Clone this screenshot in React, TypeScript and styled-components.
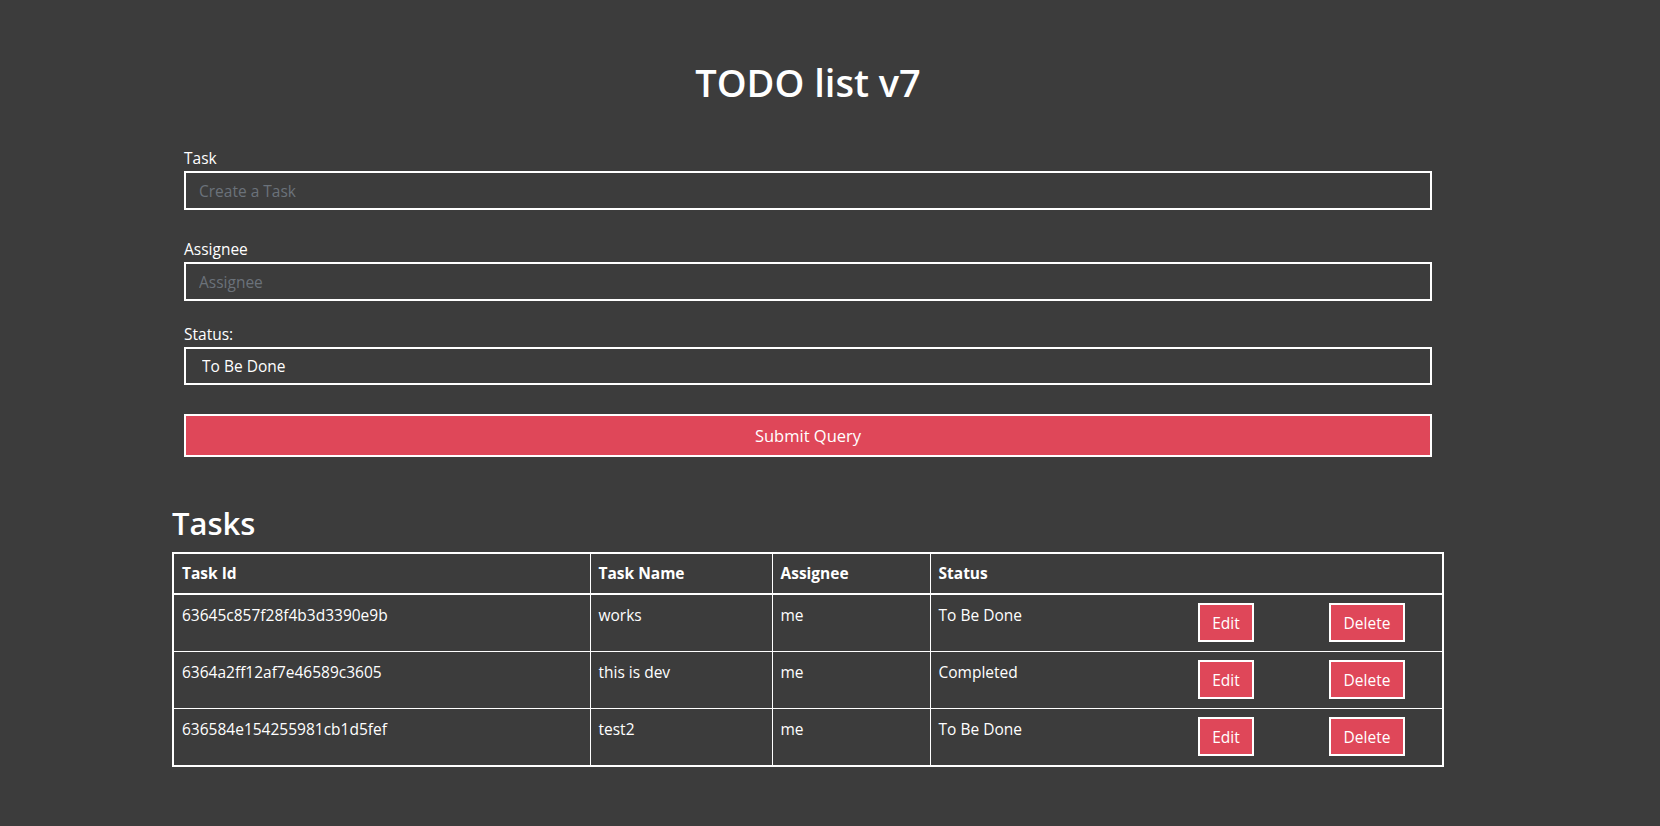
import React from "react";
import styled, { createGlobalStyle } from "styled-components";

const GlobalStyle = createGlobalStyle`
  html, body {
    margin: 0;
    padding: 0;
    background: #3c3c3c;
  }
  body {
    font-family: "Open Sans", "Noto Sans", sans-serif;
    color: #ffffff;
  }
  * { box-sizing: border-box; }
`;

const Page = styled.div`
  width: 1272px;
  margin: 0 0 40px 172px;
  display: flex;
  flex-direction: column;
`;

const Title = styled.h1`
  margin: 63px 0 47px;
  font-size: 38px;
  line-height: 38px;
  font-weight: 600;
  text-align: center;
`;

const Form = styled.form`
  padding: 0 12px;
  display: flex;
  flex-direction: column;
`;

const Field = styled.div<{ $after: number }>`
  display: flex;
  flex-direction: column;
  gap: 3px;
  margin-bottom: ${(p) => p.$after}px;
`;

const Label = styled.label`
  font-size: 15.5px;
  line-height: 20px;
`;

const TextInput = styled.input`
  height: 39px;
  border: 2px solid #ffffff;
  background: transparent;
  color: #ffffff;
  padding: 0 13px;
  font-family: inherit;
  font-size: 15.5px;
  outline: none;
  &::placeholder {
    color: #6b727a;
  }
`;

const StatusSelect = styled.select`
  height: 38px;
  border: 2px solid #ffffff;
  background: transparent;
  color: #ffffff;
  padding: 0 16px;
  font-family: inherit;
  font-size: 15.5px;
  appearance: none;
  -webkit-appearance: none;
  outline: none;
  option {
    color: #000;
  }
`;

const SubmitButton = styled.button`
  height: 43px;
  border: 2px solid #ffffff;
  background: #df4759;
  color: #ffffff;
  font-family: inherit;
  font-size: 16.5px;
  cursor: pointer;
`;

const SectionTitle = styled.h2`
  margin: 48px 0 11px;
  font-size: 31px;
  line-height: 36px;
  font-weight: 600;
`;

const Table = styled.table`
  width: 100%;
  border-collapse: collapse;
  border: 2px solid #ffffff;
  table-layout: fixed;
`;

const HeadCell = styled.th`
  border: 1px solid #ffffff;
  border-bottom-width: 2px;
  padding: 9px 8px 10px;
  font-size: 15.5px;
  line-height: 20px;
  font-weight: 700;
  text-align: left;
  vertical-align: middle;
`;

const Cell = styled.td<{ $open?: boolean }>`
  border-top: 1px solid #ffffff;
  border-bottom: 1px solid #ffffff;
  border-left: ${(p) => (p.$open ? "none" : "1px solid #ffffff")};
  border-right: ${(p) => (p.$open ? "none" : "1px solid #ffffff")};
  padding: 8px 8px 9px;
  font-size: 15.5px;
  line-height: 20px;
  text-align: left;
  vertical-align: top;
`;

const CellText = styled.div`
  padding-top: 2px;
`;

const ActionButton = styled.button<{ $w: number }>`
  display: block;
  width: ${(p) => p.$w}px;
  height: 39px;
  border: 2px solid #ffffff;
  background: #df4759;
  color: #ffffff;
  font-family: inherit;
  font-size: 15.5px;
  padding: 0;
  cursor: pointer;
`;

type Task = { id: string; name: string; assignee: string; status: string };

const tasks: Task[] = [
  { id: "63645c857f28f4b3d3390e9b", name: "works", assignee: "me", status: "To Be Done" },
  { id: "6364a2ff12af7e46589c3605", name: "this is dev", assignee: "me", status: "Completed" },
  { id: "636584e154255981cb1d5fef", name: "test2", assignee: "me", status: "To Be Done" },
];

export default function App() {
  return (
    <>
      <GlobalStyle />
      <Page>
        <Title>TODO list v7</Title>
        <Form onSubmit={(e) => e.preventDefault()}>
          <Field $after={29}>
            <Label htmlFor="task">Task</Label>
            <TextInput id="task" placeholder="Create a Task" />
          </Field>
          <Field $after={23}>
            <Label htmlFor="assignee">Assignee</Label>
            <TextInput id="assignee" placeholder="Assignee" />
          </Field>
          <Field $after={29}>
            <Label htmlFor="status">Status:</Label>
            <StatusSelect id="status" defaultValue="To Be Done">
              <option>To Be Done</option>
              <option>In Progress</option>
              <option>Completed</option>
            </StatusSelect>
          </Field>
          <SubmitButton type="submit">Submit Query</SubmitButton>
        </Form>
        <SectionTitle>Tasks</SectionTitle>
        <Table>
          <colgroup>
            <col style={{ width: 417 }} />
            <col style={{ width: 182 }} />
            <col style={{ width: 158 }} />
            <col style={{ width: 260 }} />
            <col style={{ width: 131 }} />
            <col />
          </colgroup>
          <thead>
            <tr>
              <HeadCell>Task Id</HeadCell>
              <HeadCell>Task Name</HeadCell>
              <HeadCell>Assignee</HeadCell>
              <HeadCell colSpan={3}>Status</HeadCell>
            </tr>
          </thead>
          <tbody>
            {tasks.map((t) => (
              <tr key={t.id}>
                <Cell><CellText>{t.id}</CellText></Cell>
                <Cell><CellText>{t.name}</CellText></Cell>
                <Cell><CellText>{t.assignee}</CellText></Cell>
                <Cell $open><CellText>{t.status}</CellText></Cell>
                <Cell $open>
                  <ActionButton $w={56}>Edit</ActionButton>
                </Cell>
                <Cell $open>
                  <ActionButton $w={76}>Delete</ActionButton>
                </Cell>
              </tr>
            ))}
          </tbody>
        </Table>
      </Page>
    </>
  );
}
